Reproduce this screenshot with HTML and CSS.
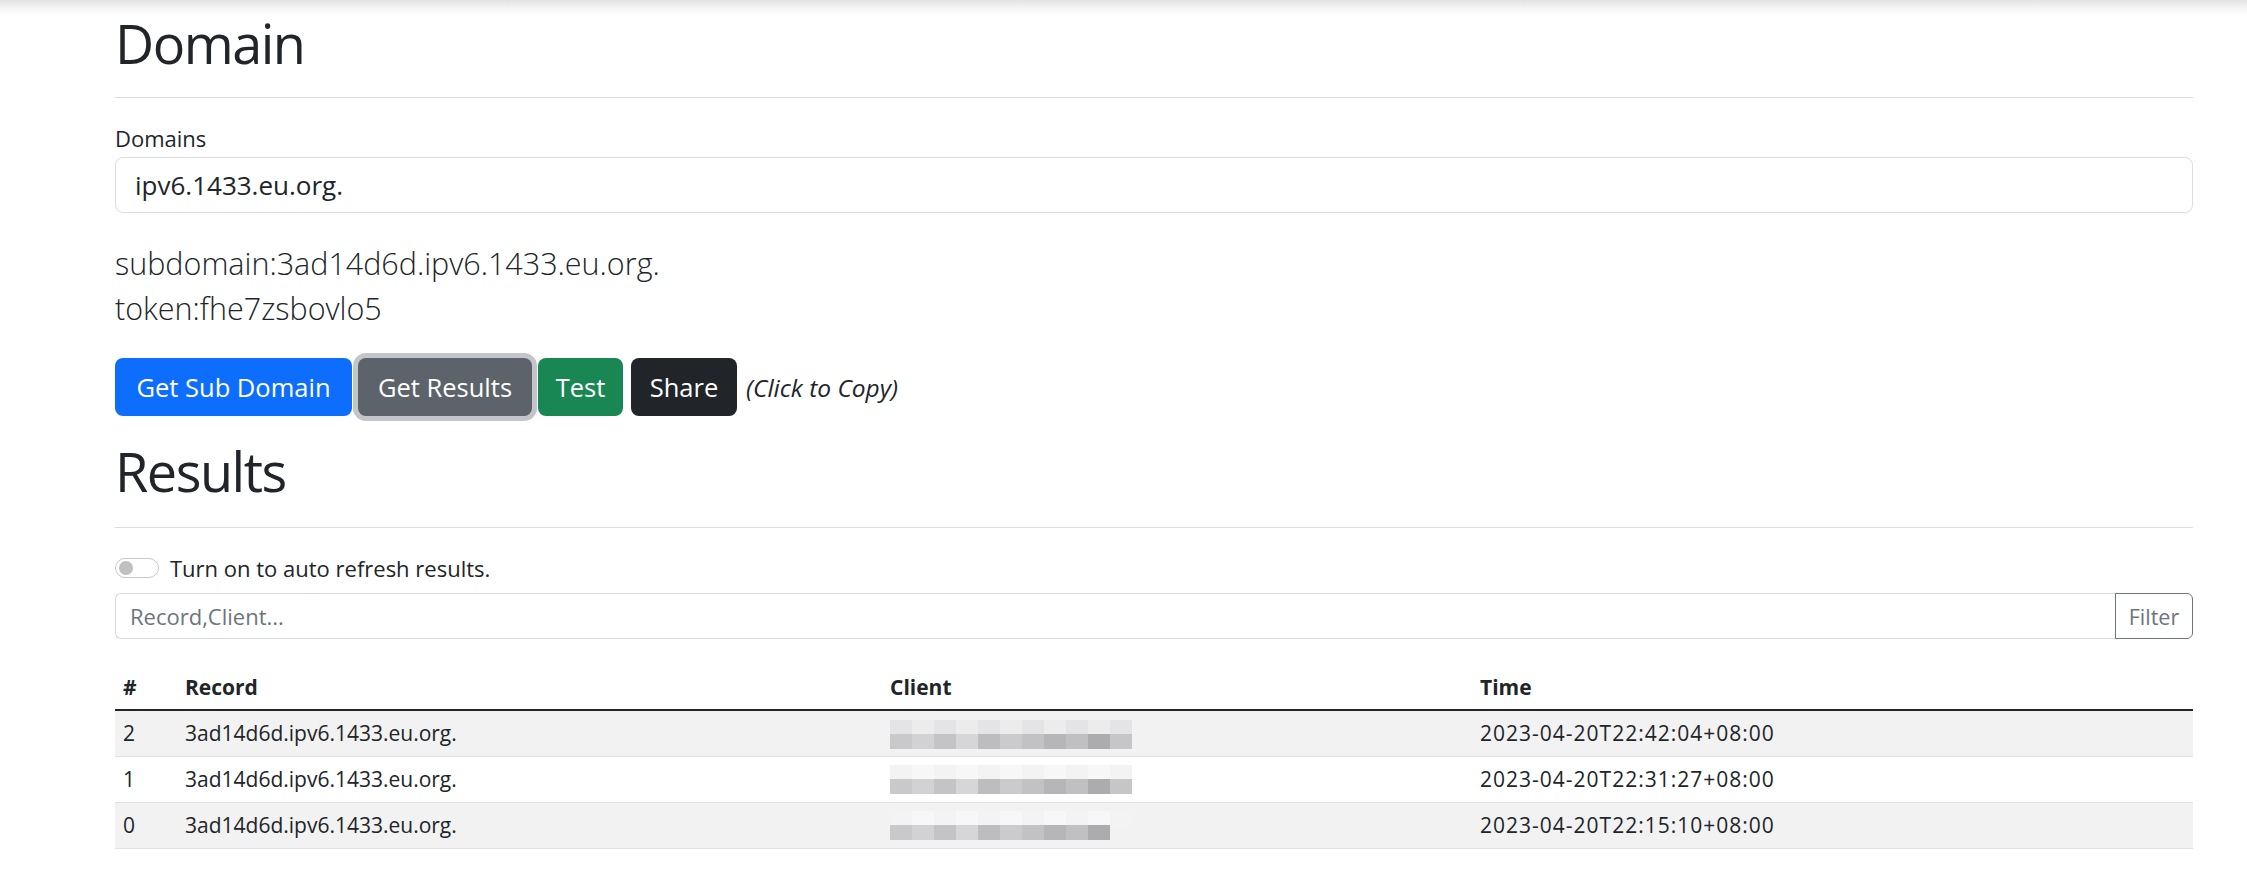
FILE: index.html
```html
<!DOCTYPE html>
<html lang="en">
<head>
<meta charset="utf-8">
<title>DNS Log</title>
<link rel="stylesheet" href="styles.css">
</head>
<body>
<main class="page">
  <h1 class="heading">Domain</h1>
  <hr class="rule">
  <label class="field-label">Domains</label>
  <div class="field">ipv6.1433.eu.org.</div>
  <div class="lead-block">
    <p class="lead">subdomain:3ad14d6d.ipv6.1433.eu.org.</p>
    <p class="lead">token:fhe7zsbovlo5</p>
  </div>
  <div class="actions">
    <button class="btn btn-primary btn-w1">Get Sub Domain</button>
    <button class="btn btn-secondary btn-focus btn-w2">Get Results</button>
    <button class="btn btn-success btn-w3">Test</button>
    <button class="btn btn-dark btn-w4">Share</button>
    <em class="hint">(Click to Copy)</em>
  </div>
  <h1 class="heading heading-results">Results</h1>
  <hr class="rule rule-results">
  <div class="switch-row">
    <span class="switch"><span class="knob"></span></span>
    <span class="switch-text">Turn on to auto refresh results.</span>
  </div>
  <div class="filter-group">
    <div class="filter-input">Record,Client...</div>
    <button class="filter-btn">Filter</button>
  </div>
  <table class="results">
    <colgroup>
      <col class="c-num"><col class="c-rec"><col class="c-client"><col class="c-time">
    </colgroup>
    <thead>
      <tr><th>#</th><th>Record</th><th>Client</th><th>Time</th></tr>
    </thead>
    <tbody>
      <tr class="odd"><td>2</td><td>3ad14d6d.ipv6.1433.eu.org.</td><td><span class="blur"><span class="blur-top"><i></i><i></i><i></i><i></i><i></i><i></i><i></i><i></i><i></i><i></i><i></i></span><span class="blur-bot"><i></i><i></i><i></i><i></i><i></i><i></i><i></i><i></i><i></i><i></i><i></i></span></span></td><td class="time">2023-04-20T22:42:04+08:00</td></tr>
      <tr><td>1</td><td>3ad14d6d.ipv6.1433.eu.org.</td><td><span class="blur"><span class="blur-top faint"><i></i><i></i><i></i><i></i><i></i><i></i><i></i><i></i><i></i><i></i><i></i></span><span class="blur-bot"><i></i><i></i><i></i><i></i><i></i><i></i><i></i><i></i><i></i><i></i><i></i></span></span></td><td class="time">2023-04-20T22:31:27+08:00</td></tr>
      <tr class="odd"><td>0</td><td>3ad14d6d.ipv6.1433.eu.org.</td><td><span class="blur"><span class="blur-top faint"><i></i><i></i><i></i><i></i><i></i><i></i><i></i><i></i><i></i><i></i><i></i></span><span class="blur-bot short"><i></i><i></i><i></i><i></i><i></i><i></i><i></i><i></i><i></i><i></i><i></i></span></span></td><td class="time">2023-04-20T22:15:10+08:00</td></tr>
    </tbody>
  </table>
</main>
</body>
</html>
```

FILE: styles.css
```css
* { box-sizing: border-box; }
html, body { margin: 0; }
body {
  font-family: "Open Sans", "Noto Sans", "Liberation Sans", sans-serif;
  color: #212529;
  background: #fff linear-gradient(#e2e2e2 0, #f4f4f4 8px, #fff 16px) no-repeat;
  background-size: 100% 16px;
}
.page { padding: 7px 54px 40px 115px; }

.heading {
  margin: 0;
  font-size: 54px;
  line-height: 72px;
  font-weight: 400;
  letter-spacing: -1.5px;
}
.heading-results { margin-top: 19px; }

.rule {
  margin: 18px 0 0;
  border: 0;
  border-top: 1px solid #dcdddf;
  height: 0;
}
.rule-results { margin-top: 20px; }

.field-label {
  display: block;
  margin-top: 22px;
  font-size: 22px;
  line-height: 36px;
}
.field {
  margin-top: 1px;
  height: 56px;
  border: 1px solid #dadde1;
  border-radius: 8px;
  padding: 0 19px;
  font-size: 26px;
  line-height: 54px;
}

.lead-block { margin-top: 28px; }
.lead {
  margin: 0;
  font-size: 30.5px;
  line-height: 45px;
  font-weight: 300;
}

.actions {
  margin-top: 27px;
  display: flex;
  align-items: center;
  gap: 6px;
}
.btn {
  height: 58px;
  border: 1px solid transparent;
  border-radius: 8px;
  color: #fff;
  font-family: inherit;
  font-size: 25.5px;
  padding: 0;
  text-align: center;
}
.btn-w1 { width: 237px; }
.btn-w2 { width: 174px; }
.btn-w3 { width: 85px; }
.btn-w4 { width: 106px; margin-left: 2px; }
.btn-primary { background: #0d6efd; }
.btn-secondary { background: #5c636a; }
.btn-focus { box-shadow: 0 0 0 5px #c2c5c9; }
.btn-success { background: #198754; }
.btn-dark { background: #212529; }
.hint {
  margin-left: 3px;
  font-size: 24.5px;
  font-style: italic;
}

.switch-row {
  margin-top: 22px;
  display: flex;
  align-items: center;
  height: 36px;
}
.switch {
  width: 44px;
  height: 20px;
  border: 1px solid #c6c8ca;
  border-radius: 10px;
  display: flex;
  align-items: center;
  padding-left: 3px;
}
.knob {
  width: 14px;
  height: 14px;
  border-radius: 50%;
  background: #c0c0c0;
}
.switch-text {
  margin-left: 11px;
  font-size: 22px;
  line-height: 36px;
}

.filter-group {
  margin-top: 7px;
  display: flex;
  height: 46px;
}
.filter-input {
  flex: 1;
  border: 1px solid #d6d9dc;
  border-right: 0;
  border-radius: 6px 0 0 6px;
  padding: 0 14px;
  font-size: 22px;
  line-height: 44px;
  color: #6c757d;
}
.filter-btn {
  width: 78px;
  border: 1px solid #6c757d;
  border-radius: 0 6px 6px 0;
  background: #fff;
  color: #6c757d;
  font-family: inherit;
  font-size: 21.5px;
  padding: 0;
}

.results {
  margin-top: 26px;
  width: 100%;
  border-collapse: collapse;
  table-layout: fixed;
  font-size: 21px;
}
.c-num { width: 62px; }
.c-rec { width: 705px; }
.c-client { width: 590px; }
.results th, .results td {
  text-align: left;
  padding: 0 8px;
  height: 46px;
  vertical-align: middle;
}
.results th {
  font-weight: 700;
  height: 45px;
  border-bottom: 2px solid #212529;
}
.results td { border-bottom: 1px solid #dee2e6; }
.results td.time { letter-spacing: 1px; }
.results tr.odd td { background: #f2f2f2; }

.blur {
  display: inline-flex;
  flex-direction: column;
  vertical-align: middle;
}
.blur-top, .blur-bot { display: flex; }
.blur i { display: block; width: 22px; }
.blur-top i { height: 14px; }
.blur-bot i { height: 15px; }
.blur-top i:nth-child(odd) { background: #e4e4e6; }
.blur-top i:nth-child(even) { background: #ececed; }
.blur-top.faint i:nth-child(odd) { background: #f3f3f4; }
.blur-top.faint i:nth-child(even) { background: #f7f7f8; }
.blur-bot i:nth-child(1) { background: #c9c9cb; }
.blur-bot i:nth-child(2) { background: #d2d2d4; }
.blur-bot i:nth-child(3) { background: #c4c4c6; }
.blur-bot i:nth-child(4) { background: #d6d6d8; }
.blur-bot i:nth-child(5) { background: #bdbdbf; }
.blur-bot i:nth-child(6) { background: #cbcbcd; }
.blur-bot i:nth-child(7) { background: #c2c2c4; }
.blur-bot i:nth-child(8) { background: #b6b6b8; }
.blur-bot i:nth-child(9) { background: #c0c0c2; }
.blur-bot i:nth-child(10) { background: #acacae; }
.blur-bot i:nth-child(11) { background: #c6c6c8; }
.blur-bot.short i:nth-child(11) { background: transparent; }
```
